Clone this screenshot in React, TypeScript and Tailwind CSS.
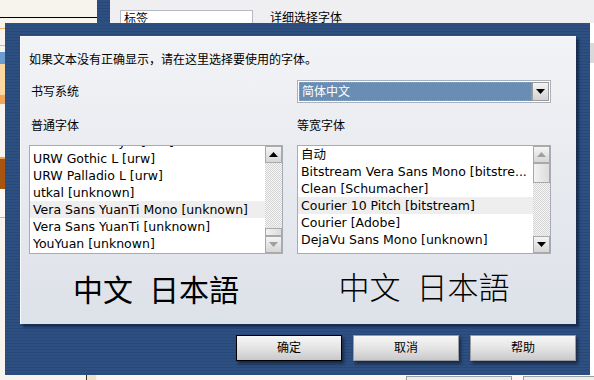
import React from "react";

const STRIPES =
  "bg-[repeating-linear-gradient(180deg,#2d4f81_0px,#2d4f81_2px,#284878_2px,#284878_3px)]";

const leftFonts = [
  "URW Chancery L [urw]",
  "URW Gothic L [urw]",
  "URW Palladio L [urw]",
  "utkal [unknown]",
  "Vera Sans YuanTi Mono [unknown]",
  "Vera Sans YuanTi [unknown]",
  "YouYuan [unknown]",
];

const monoFonts = [
  "自动",
  "Bitstream Vera Sans Mono [bitstre...",
  "Clean [Schumacher]",
  "Courier 10 Pitch [bitstream]",
  "Courier [Adobe]",
  "DejaVu Sans Mono [unknown]",
];

const Arrow: React.FC<{ dir: "up" | "down"; dim?: boolean }> = ({ dir, dim }) => (
  <svg width="9" height="5" viewBox="0 0 9 5">
    <polygon
      points={dir === "up" ? "4.5,0 9,5 0,5" : "0,0 9,0 4.5,5"}
      fill={dim ? "#a0a0a0" : "#000"}
    />
  </svg>
);

const ScrollBar: React.FC<{ atTop: boolean }> = ({ atTop }) => (
  <div className="flex flex-col w-[17px] h-full bg-[repeating-conic-gradient(#d4d4d4_0%_25%,#f6f6f6_0%_50%)] bg-[length:2px_2px]">
    <div className="h-[17px] flex items-center justify-center bg-gradient-to-b from-[#f4f4f4] to-[#d6d6d6] border border-[#a9a9a9]">
      <Arrow dir="up" dim={atTop} />
    </div>
    <div className="flex-1 flex flex-col">
      {atTop ? (
        <div className="h-[20px] bg-gradient-to-r from-[#f2f2f2] to-[#dcdcdc] border border-[#a9a9a9]" />
      ) : (
        <>
          <div className="flex-1" />
          <div className="h-[8px] bg-gradient-to-r from-[#f2f2f2] to-[#dcdcdc] border border-[#a9a9a9]" />
        </>
      )}
    </div>
    <div className="h-[17px] flex items-center justify-center bg-gradient-to-b from-[#f4f4f4] to-[#d6d6d6] border border-[#a9a9a9]">
      <Arrow dir="down" dim={!atTop} />
    </div>
  </div>
);

const FontList: React.FC<{ items: string[]; selected: number; offset: string; atTop: boolean }> = ({
  items,
  selected,
  offset,
  atTop,
}) => (
  <div className="flex h-[109px] w-[254px] bg-white border border-[#a6abb4]">
    <div className="flex-1 overflow-hidden">
      <div className={offset}>
        {items.map((f, i) => (
          <div
            key={f}
            className={`h-[17px] leading-[17px] pl-[3px] text-[12.5px] whitespace-nowrap overflow-hidden ${
              i === selected ? "bg-[#eeeeee]" : ""
            }`}
          >
            {f}
          </div>
        ))}
      </div>
    </div>
    <ScrollBar atTop={atTop} />
  </div>
);

const DlgButton: React.FC<{ label: string; primary?: boolean }> = ({ label, primary }) => (
  <button
    className={`h-[26px] w-[106px] text-[12px] text-black bg-gradient-to-b from-[#f6f6f6] via-[#e4e4e4] to-[#c9c9cc] shadow-[2px_3px_3px_rgba(0,0,0,0.45)] ${
      primary ? "border border-black" : "border border-[#9a9ca2]"
    }`}
  >
    {label}
  </button>
);

export default function App() {
  return (
    <div className="relative w-[594px] h-[380px] overflow-hidden bg-[#fdf6f0] text-[12px] text-black font-['DejaVu_Sans','Noto_Sans_CJK_SC',sans-serif]">
      {/* background windows on the desktop */}
      <div className="absolute left-0 top-0 w-[97px] h-full bg-[#f7f4ed]">
        <div className="h-[17px]" />
        <div className="h-px bg-black" />
        <div className="mt-[10px] h-px bg-[#f2b060]" />
        <div className="mt-[16px] h-px bg-[#f2b060]" />
        <div className="mt-[6px] h-[12px] w-[5px] bg-[#6a9cd0]" />
        <div className="h-[31px] bg-[#fcd7a0]" />
        <div className="h-[9px] bg-[#f2a85a]" />
        <div className="h-[53px]" />
        <div className="h-[2px] bg-[#f0a050]" />
        <div className="h-[30px] bg-[#a9540f]" />
        <div className="h-[28px] bg-[#fbf8f3]" />
        <div className="h-px bg-[#f2b060]" />
      </div>
      <div className={`absolute left-[97px] top-0 w-[13px] h-[23px] ${STRIPES}`} />
      <div className="absolute left-[110px] top-0 right-0 h-[23px] bg-[#efeff1]">
        <div className="absolute left-[10px] top-[10px] w-[133px] h-[16px] bg-white border border-[#b6bac4] pl-[3px] leading-[16px]">
          标签
        </div>
        <div className="absolute left-[160px] top-[10px] leading-[16px]">详细选择字体</div>
      </div>
      <div className="absolute left-[590px] top-[23px] w-[4px] bottom-0 bg-white">
        <div className="mt-[20px] h-[20px] bg-[#d9d9dc]" />
      </div>
      <div className="absolute left-[406px] top-[376px] w-[106px] h-[10px] border border-[#9a9ca2] bg-[#ececec]" />
      <div className="absolute left-[523px] top-[376px] w-[80px] h-[10px] border border-[#9a9ca2] bg-[#ececec]" />
      <div className="absolute left-[86px] top-[375px] w-px h-[5px] bg-[#333]" />
      <div className="absolute left-[87px] top-[375px] w-[9px] h-[5px] bg-[#efe3c8]" />

      {/* the dialog */}
      <div className={`absolute left-[5px] top-[23px] w-[585px] h-[352px] flex flex-col ${STRIPES}`}>
        <div className="ml-[15px] mt-[13px] w-[556px] h-[288px] border-t border-l border-[#f8f9fb] bg-gradient-to-b from-[#f2f3f6] to-[#dde1e8] shadow-[3px_3px_2px_rgba(10,20,40,0.55)] pl-[8px] pt-[15px]">
          <div className="leading-[16px]">如果文本没有正确显示，请在这里选择要使用的字体。</div>

          <div className="grid grid-cols-[254px_254px] gap-x-[14px]">
            <div className="mt-[12px] h-[23px] flex items-center pl-[2px]">书写系统</div>
            <div className="mt-[12px] h-[23px] flex border border-[#aab0ba] bg-white p-px">
              <div className="flex-1 bg-[#6a8db4] border border-dotted border-[#c69a5c] text-white leading-[19px] pl-[2px]">
                简体中文
              </div>
              <div className="w-[17px] flex items-center justify-center bg-gradient-to-b from-[#f4f4f4] to-[#d2d2d2] border border-[#9c9c9c]">
                <Arrow dir="down" />
              </div>
            </div>

            <div className="mt-[15px] leading-[16px] pl-[2px]">普通字体</div>
            <div className="mt-[15px] leading-[16px]">等宽字体</div>

            <div className="mt-[11px]">
              <FontList items={leftFonts} selected={4} offset="-mt-[13px]" atTop={false} />
            </div>
            <div className="mt-[11px]">
              <FontList items={monoFonts} selected={3} offset="" atTop={true} />
            </div>

            <div className="mt-[22px] flex justify-center gap-[16px] text-[30px] leading-[30px]">
              <span>中文</span>
              <span>日本語</span>
            </div>
            <div className="mt-[19px] flex justify-center gap-[16px] text-[31px] leading-[31px] font-light">
              <span>中文</span>
              <span>日本語</span>
            </div>
          </div>
        </div>

        <div className="mt-[11px] pr-[14px] flex justify-end gap-[11px]">
          <DlgButton label="确定" primary />
          <DlgButton label="取消" />
          <DlgButton label="帮助" />
        </div>
      </div>
    </div>
  );
}
